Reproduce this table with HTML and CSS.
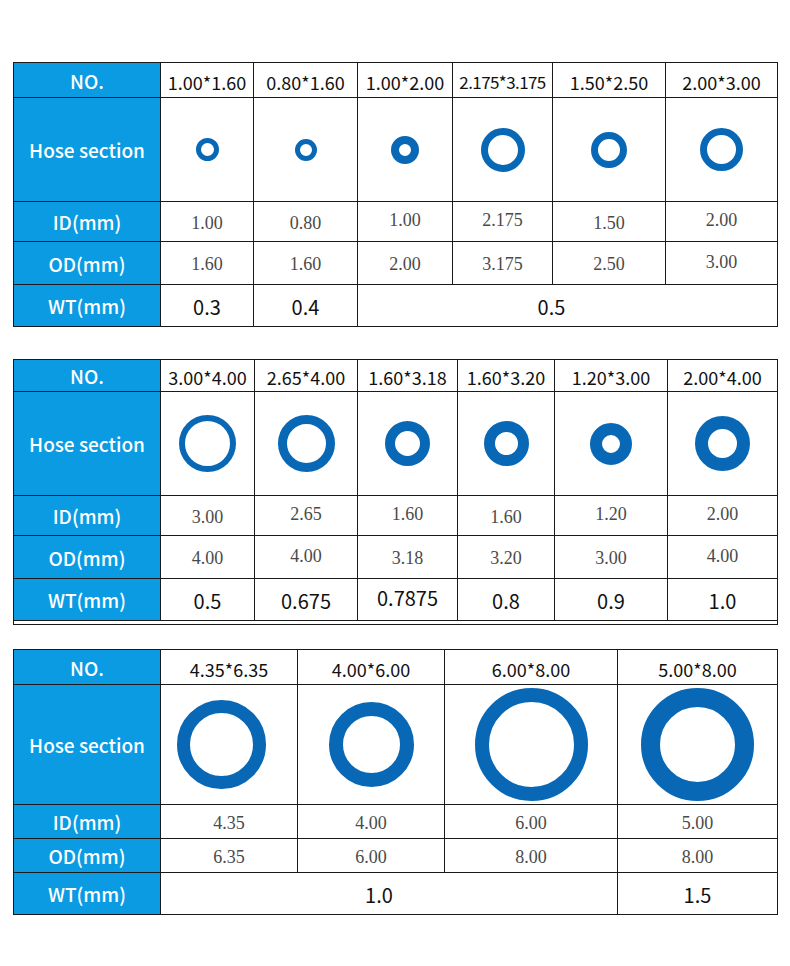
FILE: index.html
```html
<!DOCTYPE html>
<html lang="en">
<head>
  <meta charset="UTF-8" />
  <title>Hose section sizes</title>
  <link rel="stylesheet" href="styles.css">
</head>
<body>
  <div class="page">

    <table class="spec t1">
      <colgroup><col><col><col><col><col><col><col></colgroup>
      <tr class="no">
        <th>NO.</th>
        <td>1.00*1.60</td><td>0.80*1.60</td><td>1.00*2.00</td><td class="tight">2.175*3.175</td><td>1.50*2.50</td><td>2.00*3.00</td>
      </tr>
      <tr class="hose">
        <th>Hose section</th>
        <td><div class="ring" style="--d:23px;--w:5.5px"></div></td>
        <td><div class="ring" style="--d:22px;--w:5.5px"></div></td>
        <td><div class="ring" style="--d:28px;--w:8px"></div></td>
        <td><div class="ring" style="--d:44px;--w:7.5px"></div></td>
        <td><div class="ring" style="--d:36px;--w:7px"></div></td>
        <td><div class="ring" style="--d:43px;--w:7.5px"></div></td>
      </tr>
      <tr class="id">
        <th>ID(mm)</th>
        <td>1.00</td><td>0.80</td><td class="up">1.00</td><td class="up">2.175</td><td>1.50</td><td class="up">2.00</td>
      </tr>
      <tr class="od">
        <th>OD(mm)</th>
        <td>1.60</td><td>1.60</td><td>2.00</td><td>3.175</td><td>2.50</td><td class="up">3.00</td>
      </tr>
      <tr class="wt">
        <th>WT(mm)</th>
        <td>0.3</td><td>0.4</td><td colspan="4" class="span-a">0.5</td>
      </tr>
    </table>

    <table class="spec t2">
      <colgroup><col><col><col><col><col><col><col></colgroup>
      <tr class="no">
        <th>NO.</th>
        <td>3.00*4.00</td><td>2.65*4.00</td><td>1.60*3.18</td><td>1.60*3.20</td><td>1.20*3.00</td><td>2.00*4.00</td>
      </tr>
      <tr class="hose">
        <th>Hose section</th>
        <td><div class="ring" style="--d:57px;--w:6.5px"></div></td>
        <td><div class="ring" style="--d:57px;--w:9px"></div></td>
        <td><div class="ring" style="--d:45px;--w:10.5px"></div></td>
        <td><div class="ring" style="--d:45px;--w:11px"></div></td>
        <td><div class="ring" style="--d:42px;--w:12.5px"></div></td>
        <td><div class="ring" style="--d:55px;--w:13px"></div></td>
      </tr>
      <tr class="id">
        <th>ID(mm)</th>
        <td>3.00</td><td class="up">2.65</td><td class="up">1.60</td><td>1.60</td><td class="up">1.20</td><td class="up">2.00</td>
      </tr>
      <tr class="od">
        <th>OD(mm)</th>
        <td>4.00</td><td class="up">4.00</td><td>3.18</td><td>3.20</td><td>3.00</td><td class="up">4.00</td>
      </tr>
      <tr class="wt">
        <th>WT(mm)</th>
        <td>0.5</td><td>0.675</td><td class="up">0.7875</td><td>0.8</td><td>0.9</td><td>1.0</td>
      </tr>
    </table>
    <div class="rule"></div>

    <table class="spec t3">
      <colgroup><col><col><col><col><col></colgroup>
      <tr class="no">
        <th>NO.</th>
        <td>4.35*6.35</td><td>4.00*6.00</td><td>6.00*8.00</td><td>5.00*8.00</td>
      </tr>
      <tr class="hose">
        <th>Hose section</th>
        <td><div class="ring nudge" style="--d:89px;--w:13.5px"></div></td>
        <td><div class="ring" style="--d:85px;--w:14px"></div></td>
        <td><div class="ring" style="--d:113px;--w:14px"></div></td>
        <td><div class="ring" style="--d:113px;--w:19.5px"></div></td>
      </tr>
      <tr class="id">
        <th>ID(mm)</th>
        <td>4.35</td><td>4.00</td><td>6.00</td><td>5.00</td>
      </tr>
      <tr class="od">
        <th>OD(mm)</th>
        <td>6.35</td><td>6.00</td><td>8.00</td><td>8.00</td>
      </tr>
      <tr class="wt">
        <th>WT(mm)</th>
        <td colspan="3" class="span-b">1.0</td><td>1.5</td>
      </tr>
    </table>

  </div>
</body>
</html>
```

FILE: styles.css
```css
body {
  margin: 0;
  background-color: #fff;
  font-family: "Noto Sans CJK SC", "Noto Sans", sans-serif;
}
.page {
  padding: 62px 12px 40px 13px;
}
.spec {
  border-collapse: collapse;
  table-layout: fixed;
  width: 765px;
}
.spec th,
.spec td {
  border: 1px solid #1a1a1a;
  padding: 0;
  text-align: center;
  vertical-align: middle;
  line-height: 1;
}
.spec th {
  background-color: #0b9be3;
  color: #fff;
  font-size: 19px;
  font-weight: 500;
}
.spec .no td {
  font-size: 18px;
  color: #111;
  padding-top: 3px;
}
.spec .no td.tight {
  font-size: 17px;
  letter-spacing: -0.6px;
}
.spec .id td,
.spec .od td {
  font-family: "Liberation Serif", "Times New Roman", serif;
  font-size: 18px;
  color: #4a4a4a;
  padding-top: 2px;
}
.spec .od td {
  border-top-color: #777;
}
.spec .wt td {
  font-size: 20px;
  color: #111;
  padding-top: 2px;
}
.spec td.up {
  padding-top: 0;
  padding-bottom: 3px;
}
.spec .wt td.span-a {
  padding-right: 32px;
}
.spec .wt td.span-b {
  padding-right: 20px;
}
.ring {
  display: block;
  margin: 0 auto;
  width: var(--d);
  height: var(--d);
  border: var(--w) solid #0868b5;
  border-radius: 50%;
  box-sizing: border-box;
}
.ring.nudge {
  position: relative;
  left: -8px;
}

/* column widths */
.t1 col:nth-child(1), .t2 col:nth-child(1), .t3 col:nth-child(1) { width: 147px; }
.t1 col:nth-child(2) { width: 93px; }
.t1 col:nth-child(3) { width: 104px; }
.t1 col:nth-child(4) { width: 95px; }
.t1 col:nth-child(5) { width: 100px; }
.t1 col:nth-child(6) { width: 113px; }
.t1 col:nth-child(7) { width: 112px; }

.t2 col:nth-child(2) { width: 94px; }
.t2 col:nth-child(3) { width: 103px; }
.t2 col:nth-child(4) { width: 100px; }
.t2 col:nth-child(5) { width: 97px; }
.t2 col:nth-child(6) { width: 113px; }
.t2 col:nth-child(7) { width: 110px; }

.t3 col:nth-child(2) { width: 137px; }
.t3 col:nth-child(3) { width: 147px; }
.t3 col:nth-child(4) { width: 173px; }
.t3 col:nth-child(5) { width: 160px; }

/* row heights */
.t1 .no { height: 35px; }
.t1 .hose { height: 104px; }
.t1 .id { height: 40px; }
.t1 .od { height: 43px; }
.t1 .wt { height: 42px; }

.t2 {
  margin-top: 32px;
}
.t2 .no { height: 32px; }
.t2 .hose { height: 104px; }
.t2 .id { height: 40px; }
.t2 .od { height: 43px; }
.t2 .wt { height: 42px; }

.rule {
  width: 765px;
  height: 4px;
  box-sizing: border-box;
  border: 1px solid #1a1a1a;
  border-top: none;
}

.t3 {
  margin-top: 24px;
}
.t3 .no { height: 35px; }
.t3 .hose { height: 120px; }
.t3 .id { height: 34px; }
.t3 .od { height: 34px; }
.t3 .wt { height: 42px; }
```
